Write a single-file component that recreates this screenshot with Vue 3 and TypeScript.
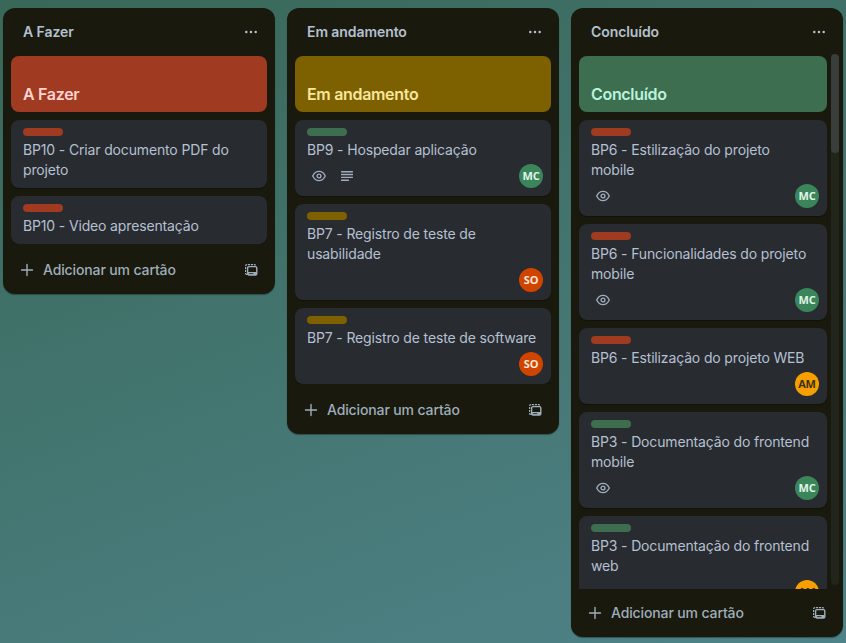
<script setup lang="ts">
type Tone = 'red' | 'yellow' | 'green'

interface Member {
  initials: string
  tone: 'teal' | 'orange' | 'amber'
}

interface Card {
  title: string
  label: Tone
  watching?: boolean
  description?: boolean
  member?: Member
}

interface List {
  title: string
  tone: Tone
  scrollable?: boolean
  cards: Card[]
}

const mc: Member = { initials: 'MC', tone: 'teal' }
const so: Member = { initials: 'SO', tone: 'orange' }
const am: Member = { initials: 'AM', tone: 'amber' }

const lists: List[] = [
  {
    title: 'A Fazer',
    tone: 'red',
    cards: [
      { title: 'BP10 - Criar documento PDF do projeto', label: 'red' },
      { title: 'BP10 - Video apresentação', label: 'red' },
    ],
  },
  {
    title: 'Em andamento',
    tone: 'yellow',
    cards: [
      { title: 'BP9 - Hospedar aplicação', label: 'green', watching: true, description: true, member: mc },
      { title: 'BP7 - Registro de teste de usabilidade', label: 'yellow', member: so },
      { title: 'BP7 - Registro de teste de software', label: 'yellow', member: so },
    ],
  },
  {
    title: 'Concluído',
    tone: 'green',
    scrollable: true,
    cards: [
      { title: 'BP6 - Estilização do projeto mobile', label: 'red', watching: true, member: mc },
      { title: 'BP6 - Funcionalidades do projeto mobile', label: 'red', watching: true, member: mc },
      { title: 'BP6 - Estilização do projeto WEB', label: 'red', member: am },
      { title: 'BP3 - Documentação do frontend mobile', label: 'green', watching: true, member: mc },
      { title: 'BP3 - Documentação do frontend web', label: 'green', member: am },
    ],
  },
]
</script>

<template>
  <main class="board">
    <section v-for="list in lists" :key="list.title" class="list" :class="{ scrollable: list.scrollable }">
      <header class="list-header">
        <h2>{{ list.title }}</h2>
        <svg class="icon" viewBox="0 0 16 16" fill="currentColor">
          <circle cx="3.3" cy="8" r="1.25" />
          <circle cx="8" cy="8" r="1.25" />
          <circle cx="12.7" cy="8" r="1.25" />
        </svg>
      </header>

      <div class="list-body">
        <div class="cards">
          <article class="cover" :class="list.tone">{{ list.title }}</article>
          <article v-for="card in list.cards" :key="card.title" class="card">
            <span class="label" :class="card.label"></span>
            <p class="card-title">{{ card.title }}</p>
            <div v-if="card.member" class="card-meta">
              <svg v-if="card.watching" class="icon" viewBox="0 0 16 16" fill="none" stroke="currentColor">
                <path d="M1.7 8C3.1 5 5.2 3.4 8 3.4S12.9 5 14.3 8C12.9 11 10.8 12.6 8 12.6S3.1 11 1.7 8Z" stroke-width="1.3" />
                <circle cx="8" cy="8" r="1.9" stroke-width="1.4" />
              </svg>
              <svg v-if="card.description" class="icon" viewBox="0 0 16 16" fill="currentColor">
                <rect x="2" y="3" width="12" height="1.4" rx=".5" />
                <rect x="2" y="5.8" width="12" height="1.4" rx=".5" />
                <rect x="2" y="8.7" width="12" height="1.4" rx=".5" />
                <rect x="2" y="11.5" width="8" height="1.4" rx=".5" />
              </svg>
              <span class="avatar" :class="card.member.tone">{{ card.member.initials }}</span>
            </div>
          </article>
        </div>
        <div v-if="list.scrollable" class="track"><div class="thumb"></div></div>
      </div>

      <footer class="list-footer">
        <svg class="icon" viewBox="0 0 16 16" fill="none" stroke="currentColor" stroke-width="1.4" stroke-linecap="round">
          <path d="M8 2.5V13.5M2.5 8H13.5" />
        </svg>
        <span class="add">Adicionar um cartão</span>
        <svg class="icon" viewBox="0 0 16 16" fill="none" stroke="currentColor">
          <path d="M4 12.3H3.6Q2.6 12.3 2.6 11.3V4Q2.6 2.6 4 2.6H11.2Q12.5 2.6 12.5 3.4" stroke-width="1.2" stroke-dasharray="2.2 .8" />
          <rect x="4.6" y="4.6" width="9.2" height="8.4" rx="1.3" stroke-width="1.4" />
          <path d="M4.6 10H13.8V12Q13.8 13 12.8 13H5.6Q4.6 13 4.6 12Z" fill="currentColor" stroke="none" />
          <path d="M6 11.6H10.4" stroke="#191a0d" stroke-width=".8" />
        </svg>
      </footer>
    </section>
  </main>
</template>

<style>
body {
  margin: 0;
  overflow: hidden;
}
</style>

<style scoped>
.board {
  box-sizing: border-box;
  display: flex;
  align-items: flex-start;
  gap: 12px;
  width: 846px;
  height: 643px;
  padding: 8px 3px 6px;
  background: linear-gradient(160deg, #396858 0%, #4e8389 100%);
  color: #b5c0d0;
  font: 400 14px/20px Inter, sans-serif;
}

.list {
  display: flex;
  flex: none;
  flex-direction: column;
  width: 272px;
  border-radius: 12px;
  background: #191a0d;
  box-shadow: 0 1px 1px rgba(9, 20, 20, 0.4);
}

.list.scrollable {
  height: 629px;
}

.list-header {
  display: flex;
  flex: none;
  align-items: center;
  justify-content: space-between;
  height: 48px;
  padding: 0 16px 0 20px;
}

h2 {
  margin: 0;
  font-size: 14px;
  font-weight: 600;
  line-height: 20px;
  letter-spacing: -0.08px;
}

.icon {
  display: block;
  flex: none;
  width: 16px;
  height: 16px;
}

.list-body {
  display: flex;
  gap: 4px;
  min-height: 0;
  padding: 0 8px 2px;
}

.scrollable .list-body {
  flex: 1;
  padding: 0 4px 0 8px;
}

.cards {
  display: flex;
  flex: 1;
  flex-direction: column;
  gap: 8px;
  min-width: 0;
  overflow: hidden;
}

.cover {
  box-sizing: border-box;
  flex: none;
  height: 56px;
  padding: 28px 12px 8px;
  border-radius: 8px;
  font-size: 16px;
  font-weight: 600;
  line-height: 20px;
  letter-spacing: -0.32px;
}

.red {
  background: #a03a20;
  color: #ffd5d2;
}

.yellow {
  background: #7d6000;
  color: #f8e69f;
}

.green {
  background: #3d6e50;
  color: #baf3db;
}

.card {
  flex: none;
  padding: 8px 12px;
  border-radius: 8px;
  background: #282b30;
  box-shadow: 0 1px 1px rgba(0, 0, 0, 0.35);
}

.label {
  display: block;
  width: 40px;
  height: 8px;
  margin-bottom: 4px;
  border-radius: 4px;
}

.card-title {
  margin: 0;
  letter-spacing: -0.15px;
}

.card-meta {
  display: flex;
  align-items: center;
  gap: 12px;
  height: 24px;
  margin: 4px -4px 0 0;
  padding-left: 4px;
  color: #9fadbc;
}

.avatar {
  width: 24px;
  height: 24px;
  margin-left: auto;
  border-radius: 50%;
  font: 700 11px/24px "Open Sans", sans-serif;
  letter-spacing: -0.2px;
  text-align: center;
}

.teal {
  background: #3b855b;
  color: #e0f5ea;
}

.orange {
  background: #cf4500;
  color: #ffe5db;
}

.amber {
  background: #f79f00;
  color: #3b3210;
}

.track {
  width: 8px;
  height: 531px;
  margin-top: -2px;
  border-radius: 4px;
  background: #22251b;
}

.thumb {
  height: 99px;
  border-radius: 4px;
  background: #3a3e3a;
}

.list-footer {
  display: flex;
  flex: none;
  align-items: center;
  gap: 8px;
  height: 48px;
  padding: 0 16px;
  color: #9fadbc;
}

.add {
  flex: 1;
  font-weight: 500;
  letter-spacing: -0.13px;
}
</style>
